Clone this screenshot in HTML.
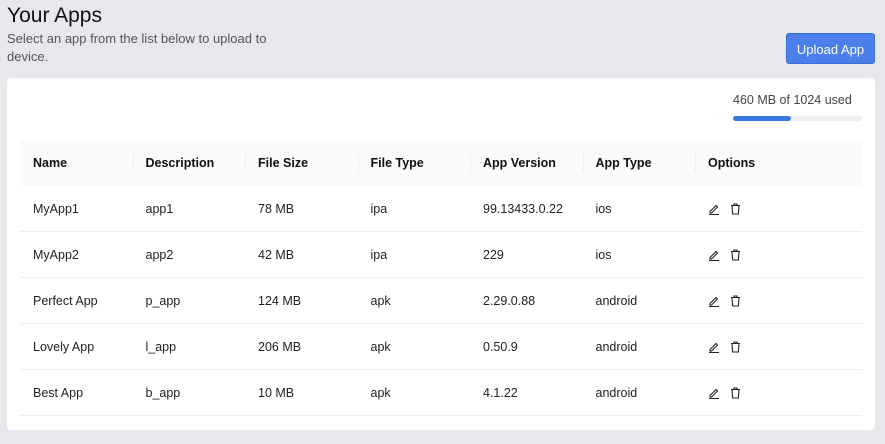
<!DOCTYPE html>
<html><head><style>
body{margin:0;width:885px;height:444px;background:#e7e8ec;font-family:"Liberation Sans",Arial,sans-serif;position:relative;overflow:hidden;color:#111}
h1{position:absolute;left:7px;top:4px;margin:0;font-size:21px;font-weight:normal;color:#111}
.sub{position:absolute;left:7px;top:30px;width:260px;font-size:13px;line-height:18px;color:#555}
.btn{position:absolute;left:786px;top:33px;width:89px;height:31px;background:#4b7fe9;border:1px solid #3d6fd6;box-sizing:border-box;border-radius:3px;color:#fff;font-size:13px;line-height:31px;text-align:center}
.card{position:absolute;left:7px;top:78px;width:868px;height:352px;background:#fff;border-radius:4px}
.used{position:absolute;left:726px;top:15px;font-size:12.5px;color:#444}
.bar{position:absolute;left:726px;top:38px;width:129px;height:5px;background:#eeeff1;border-radius:3px}
.bar div{width:58px;height:5px;background:#3a78e6;border-radius:3px}
table{position:absolute;left:13px;top:62px;width:842px;border-collapse:collapse;font-size:12.5px;table-layout:fixed}
th{background:#fafafa;text-align:left;font-weight:bold;height:46px;padding:0 0 0 13px;position:relative;color:#111}
th+th:before{content:"";position:absolute;left:0;top:14px;height:18px;border-left:1px solid #eee}
td{height:45px;border-bottom:1px solid #eee;padding:0 0 0 13px;color:#222}
col.c{width:112.5px}
svg{vertical-align:middle;margin-right:10px}
</style></head><body>
<h1>Your Apps</h1>
<div class="sub">Select an app from the list below to upload to device.</div>
<div class="btn">Upload App</div>
<div class="card">
<div class="used">460 MB of 1024 used</div>
<div class="bar"><div></div></div>
<table>
<colgroup><col class="c"><col class="c"><col class="c"><col class="c"><col class="c"><col class="c"><col></colgroup>
<tr><th>Name</th><th>Description</th><th>File Size</th><th>File Type</th><th>App Version</th><th>App Type</th><th>Options</th></tr>
<tr><td>MyApp1</td><td>app1</td><td>78 MB</td><td>ipa</td><td>99.13433.0.22</td><td>ios</td><td class="o"></td></tr>
<tr><td>MyApp2</td><td>app2</td><td>42 MB</td><td>ipa</td><td>229</td><td>ios</td><td class="o"></td></tr>
<tr><td>Perfect App</td><td>p_app</td><td>124 MB</td><td>apk</td><td>2.29.0.88</td><td>android</td><td class="o"></td></tr>
<tr><td>Lovely App</td><td>l_app</td><td>206 MB</td><td>apk</td><td>0.50.9</td><td>android</td><td class="o"></td></tr>
<tr><td>Best App</td><td>b_app</td><td>10 MB</td><td>apk</td><td>4.1.22</td><td>android</td><td class="o"></td></tr>
</table>
</div>
<script>
document.querySelectorAll('.o').forEach(function(c){c.innerHTML='<svg width="12" height="12" viewBox="0 0 12 12" fill="none" stroke="#222" stroke-width="1.1"><path d="M2 8.5L8 2.5L9.5 4L3.5 10H2z"/><path d="M1 11.5H11"/></svg><svg width="11" height="12" viewBox="0 0 11 12" fill="none" stroke="#222" stroke-width="1.1"><path d="M1 2.5H10M4 2.5V1H7V2.5M2 2.5L2.6 11H8.4L9 2.5"/></svg>';});
</script>
</body></html>
